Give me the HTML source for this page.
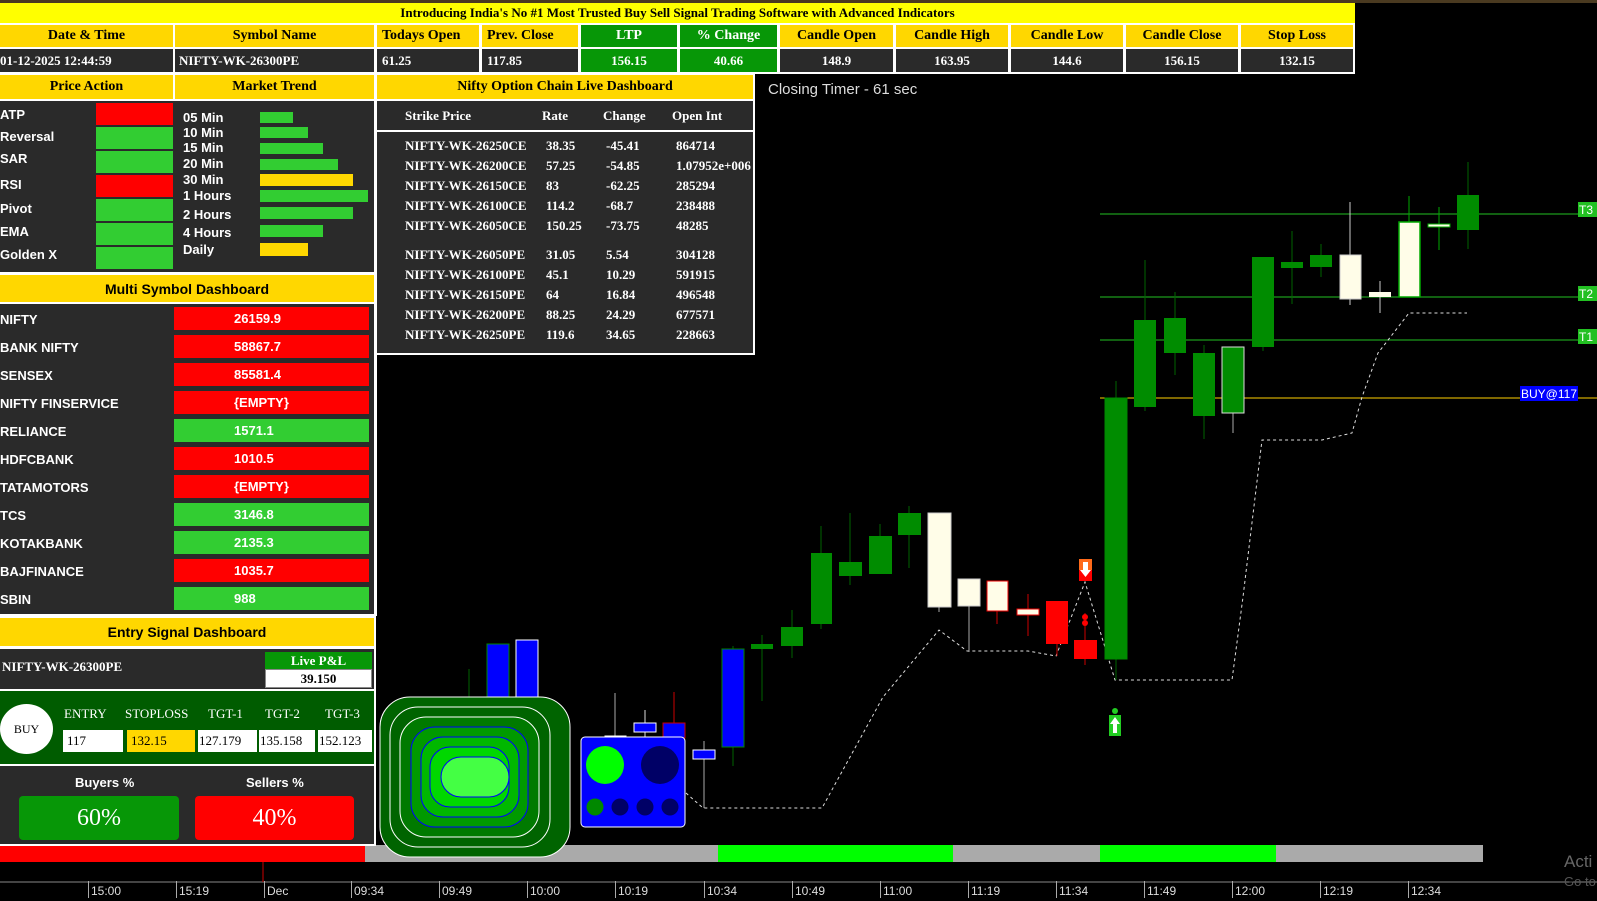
<!DOCTYPE html><html><head><style>
*{margin:0;padding:0;box-sizing:border-box}
body{width:1597px;height:898px;background:#000;overflow:hidden;position:relative;font-family:"Liberation Sans",sans-serif}
.a{position:absolute}
.g{background:#ffd700;color:#000}
.d{background:#2a2a2a;color:#fff}
.serif{font-family:"Liberation Serif",serif;font-weight:bold}
.c{display:flex;align-items:center;justify-content:center}
.hd{font-family:"Liberation Serif",serif;font-weight:bold;font-size:14px}
.lb{font-weight:bold;font-size:13px;color:#fff}
.ms{position:absolute;left:0;font-weight:bold;font-size:13px;color:#fff}
.mv{position:absolute;left:174px;width:195px;height:23px;font-weight:bold;font-size:13px;color:#fff;padding-left:60px;line-height:23px}
.oc{position:absolute;font-family:"Liberation Serif",serif;font-weight:bold;font-size:13px;color:#fff}
.ax{position:absolute;top:881px;font-size:12px;color:#ddd;border-left:1px solid #aaa;padding-left:2px;height:17px;line-height:20px}
</style></head><body>
<svg class="a" style="left:0;top:0" width="1597" height="898">
<line x1="1100" y1="214" x2="1597" y2="214" stroke="#22c022" stroke-width="1"/>
<line x1="1100" y1="297" x2="1597" y2="297" stroke="#22c022"/>
<line x1="1100" y1="340" x2="1597" y2="340" stroke="#22c022"/>
<line x1="1100" y1="398" x2="1597" y2="398" stroke="#ffd000"/>
<rect x="1578" y="202" width="19" height="15" fill="#22c022"/><text x="1579" y="214" font-size="12" fill="#fff" font-family="Liberation Sans">T3</text>
<rect x="1578" y="286" width="19" height="15" fill="#22c022"/><text x="1579" y="298" font-size="12" fill="#fff" font-family="Liberation Sans">T2</text>
<rect x="1578" y="329" width="19" height="15" fill="#22c022"/><text x="1579" y="341" font-size="12" fill="#fff" font-family="Liberation Sans">T1</text>
<rect x="1520" y="386" width="58" height="15" fill="#0000ff"/><text x="1521" y="398" font-size="12" fill="#fff" font-family="Liberation Sans">BUY@117</text>
<polyline fill="none" stroke="#ddd" stroke-dasharray="3,3" points="686,793 703,808 822,808 883,697 939,630 967,651 1028,651 1056,656 1085,582 1115,680 1232,680 1243,597 1262,440 1322,440 1352,433 1362,397 1378,353 1409,313 1467,313"/>
<g stroke-width="1">
<line x1="469" y1="669" x2="469" y2="700" stroke="#006400"/>
<line x1="615" y1="693" x2="615" y2="740" stroke="#aaa"/>
<line x1="645" y1="710" x2="645" y2="740" stroke="#ddd"/>
<line x1="674" y1="692" x2="674" y2="740" stroke="#c00"/>
<line x1="704" y1="741" x2="704" y2="808" stroke="#aaa"/>
<line x1="733" y1="646" x2="733" y2="766" stroke="#006400"/>
<line x1="762" y1="635" x2="762" y2="701" stroke="#006400"/>
<line x1="792" y1="610" x2="792" y2="658" stroke="#006400"/>
<line x1="821" y1="526" x2="821" y2="629" stroke="#006400"/>
<line x1="850" y1="513" x2="850" y2="585" stroke="#006400"/>
<line x1="880" y1="524" x2="880" y2="574" stroke="#006400"/>
<line x1="909" y1="506" x2="909" y2="568" stroke="#006400"/>
<line x1="939" y1="513" x2="939" y2="612" stroke="#aaa"/>
<line x1="969" y1="579" x2="969" y2="652" stroke="#aaa"/>
<line x1="997" y1="581" x2="997" y2="624" stroke="#c00"/>
<line x1="1028" y1="594" x2="1028" y2="636" stroke="#c00"/>
<line x1="1057" y1="601" x2="1057" y2="656" stroke="#c00"/>
<line x1="1085" y1="613" x2="1085" y2="665" stroke="#c00"/>
<line x1="1116" y1="381" x2="1116" y2="680" stroke="#006400"/>
<line x1="1145" y1="260" x2="1145" y2="411" stroke="#006400"/>
<line x1="1175" y1="292" x2="1175" y2="375" stroke="#006400"/>
<line x1="1204" y1="345" x2="1204" y2="439" stroke="#006400"/>
<line x1="1233" y1="347" x2="1233" y2="433" stroke="#aaa"/>
<line x1="1263" y1="257" x2="1263" y2="351" stroke="#006400"/>
<line x1="1292" y1="231" x2="1292" y2="304" stroke="#006400"/>
<line x1="1321" y1="244" x2="1321" y2="277" stroke="#006400"/>
<line x1="1350" y1="202" x2="1350" y2="305" stroke="#ccc"/>
<line x1="1380" y1="281" x2="1380" y2="313" stroke="#ccc"/>
<line x1="1409" y1="196" x2="1409" y2="222" stroke="#0a0"/>
<line x1="1439" y1="207" x2="1439" y2="250" stroke="#0a0"/>
<line x1="1468" y1="162" x2="1468" y2="249" stroke="#006400"/>
</g>
<rect x="487" y="644" width="22" height="60" fill="#00f" stroke="#080"/>
<rect x="516" y="640" width="22" height="64" fill="#00f" stroke="#fff"/>
<rect x="605" y="736" width="21" height="3" fill="#00f" stroke="#fff"/>
<rect x="634" y="723" width="22" height="9" fill="#00f" stroke="#fff"/>
<rect x="663" y="723" width="22" height="15" fill="#00f" stroke="#c00"/>
<rect x="693" y="750" width="22" height="9" fill="#00f" stroke="#fff"/>
<rect x="722" y="649" width="22" height="98" fill="#00f" stroke="#080"/>
<rect x="751" y="644" width="22" height="5" fill="#008c00"/>
<rect x="781" y="627" width="22" height="19" fill="#008c00"/>
<rect x="811" y="553" width="21" height="71" fill="#008c00"/>
<rect x="839" y="562" width="23" height="14" fill="#008c00"/>
<rect x="869" y="536" width="23" height="38" fill="#008c00"/>
<rect x="898" y="513" width="23" height="22" fill="#008c00"/>
<rect x="928" y="513" width="23" height="94" fill="#fffde8" stroke="#ccc"/>
<rect x="958" y="579" width="22" height="27" fill="#fffde8" stroke="#ccc"/>
<rect x="987" y="581" width="21" height="30" fill="#fffde8" stroke="#e00"/>
<rect x="1017" y="609" width="22" height="6" fill="#fffde8" stroke="#e00"/>
<rect x="1046" y="601" width="22" height="43" fill="#f00"/>
<rect x="1074" y="640" width="23" height="19" fill="#f00"/>
<circle cx="1085" cy="617" r="3" fill="#f00"/><circle cx="1085" cy="623" r="3" fill="#f00"/>
<rect x="1079" y="559" width="13" height="11" fill="#ff6a1a"/><rect x="1079" y="570" width="13" height="11" fill="#f00"/>
<path d="M1083 562h5v8h3l-5.5 7l-5.5-7h3z" fill="#fff"/>
<rect x="1105" y="398" width="22" height="261" fill="#008c00" stroke="#080"/>
<rect x="1109" y="715" width="12" height="21" fill="#2c2"/><path d="M1115 717l5 7h-3v9h-4v-9h-3z" fill="#fff"/><circle cx="1115" cy="711" r="3" fill="#2c2"/>
<rect x="1134" y="320" width="22" height="87" fill="#008c00"/>
<rect x="1164" y="318" width="22" height="35" fill="#008c00"/>
<rect x="1193" y="353" width="22" height="63" fill="#008c00"/>
<rect x="1222" y="347" width="22" height="66" fill="#008c00" stroke="#ddd"/>
<rect x="1252" y="257" width="22" height="90" fill="#008c00"/>
<rect x="1281" y="262" width="22" height="6" fill="#008c00"/>
<rect x="1310" y="255" width="22" height="12" fill="#008c00"/>
<rect x="1340" y="255" width="21" height="44" fill="#fffde8" stroke="#ccc"/>
<rect x="1369" y="292" width="22" height="5" fill="#fffde8"/>
<rect x="1399" y="222" width="21" height="75" fill="#fffde8" stroke="#0a0" stroke-width="1.5"/>
<rect x="1428" y="224" width="22" height="3" fill="#fffde8" stroke="#0a0"/>
<rect x="1457" y="195" width="22" height="35" fill="#008c00"/>
<rect x="0" y="845" width="365" height="17" fill="#f00"/>
<rect x="365" y="845" width="353" height="17" fill="#aaa"/>
<rect x="718" y="845" width="235" height="17" fill="#00ff00"/>
<rect x="953" y="845" width="147" height="17" fill="#aaa"/>
<rect x="1100" y="845" width="176" height="17" fill="#00ff00"/>
<rect x="1276" y="845" width="207" height="17" fill="#aaa"/>
<line x1="0" y1="882" x2="1597" y2="882" stroke="#888"/>
<line x1="263" y1="862" x2="263" y2="882" stroke="#c00"/>
<rect x="380" y="697" width="190" height="160" rx="30" fill="#006400" stroke="#fff"/>
<rect x="390" y="707" width="160" height="140" rx="28" fill="#006400" stroke="#fff"/>
<rect x="400" y="717" width="139" height="120" rx="26" fill="#007a00" stroke="#fff"/>
<rect x="411" y="727" width="117" height="100" rx="24" fill="#009a00" stroke="#00f"/>
<rect x="421" y="737" width="98" height="80" rx="22" fill="#00b800" stroke="#00f"/>
<rect x="430" y="747" width="79" height="60" rx="20" fill="#00d800" stroke="#00f"/>
<rect x="441" y="757" width="68" height="40" rx="20" fill="#44ff44" stroke="#00f"/>
<rect x="581" y="737" width="104" height="90" rx="4" fill="#0000ff" stroke="#fff"/>
<ellipse cx="605" cy="765" rx="19" ry="19" fill="#00ff00"/>
<ellipse cx="660" cy="765" rx="19" ry="19" fill="#000066"/>
<circle cx="595" cy="807" r="8.5" fill="#008800"/>
<circle cx="620" cy="807" r="8.5" fill="#000066"/>
<circle cx="645" cy="807" r="8.5" fill="#000066"/>
<circle cx="670" cy="807" r="8.5" fill="#000066"/>
<text x="1564" y="867" font-size="17" fill="#666" font-family="Liberation Sans">Acti</text>
<text x="1564" y="886" font-size="13" fill="#555" font-family="Liberation Sans">Go to</text>
</svg>

<div class="a" style="left:0;top:0;width:1597px;height:3px;background:#4a3a20"></div>
<div class="a c serif" style="left:0;top:3px;width:1355px;height:20px;background:#ffff00;font-size:13px">Introducing India's No #1 Most Trusted Buy Sell Signal Trading Software with Advanced Indicators</div>
<div class="a" style="left:0;top:23px;width:1355px;height:51px;background:#fff"></div>
<div class="a g c hd" style="left:0;top:25px;width:173px;height:22px">Date &amp; Time</div>
<div class="a g c hd" style="left:175px;top:25px;width:199px;height:22px">Symbol Name</div>
<div class="a g c hd" style="left:377px;top:25px;width:102px;height:22px;justify-content:flex-start;padding-left:5px">Todays Open</div>
<div class="a g c hd" style="left:482px;top:25px;width:96px;height:22px;justify-content:flex-start;padding-left:5px">Prev. Close</div>
<div class="a c hd" style="left:581px;top:25px;width:96px;height:22px;background:#079707;color:#fff">LTP</div>
<div class="a c hd" style="left:680px;top:25px;width:97px;height:22px;background:#079707;color:#fff">% Change</div>
<div class="a g c hd" style="left:780px;top:25px;width:113px;height:22px">Candle Open</div>
<div class="a g c hd" style="left:896px;top:25px;width:112px;height:22px">Candle High</div>
<div class="a g c hd" style="left:1011px;top:25px;width:112px;height:22px">Candle Low</div>
<div class="a g c hd" style="left:1126px;top:25px;width:112px;height:22px">Candle Close</div>
<div class="a g c hd" style="left:1241px;top:25px;width:112px;height:22px">Stop Loss</div>
<div class="a d c hd" style="left:0;top:49px;width:173px;height:23px;justify-content:flex-start;font-size:13px">01-12-2025 12:44:59</div>
<div class="a d c hd" style="left:175px;top:49px;width:199px;height:23px;justify-content:flex-start;padding-left:4px;font-size:13px">NIFTY-WK-26300PE</div>
<div class="a d c hd" style="left:377px;top:49px;width:102px;height:23px;justify-content:flex-start;padding-left:5px;font-size:13px">61.25</div>
<div class="a d c hd" style="left:482px;top:49px;width:96px;height:23px;justify-content:flex-start;padding-left:5px;font-size:13px">117.85</div>
<div class="a c hd" style="left:581px;top:49px;width:96px;height:23px;background:#079707;color:#fff;font-size:13px">156.15</div>
<div class="a c hd" style="left:680px;top:49px;width:97px;height:23px;background:#079707;color:#fff;font-size:13px">40.66</div>
<div class="a d c hd" style="left:780px;top:49px;width:113px;height:23px;font-size:13px">148.9</div>
<div class="a d c hd" style="left:896px;top:49px;width:112px;height:23px;font-size:13px">163.95</div>
<div class="a d c hd" style="left:1011px;top:49px;width:112px;height:23px;font-size:13px">144.6</div>
<div class="a d c hd" style="left:1126px;top:49px;width:112px;height:23px;font-size:13px">156.15</div>
<div class="a d c hd" style="left:1241px;top:49px;width:112px;height:23px;font-size:13px">132.15</div>

<div class="a" style="left:0;top:74px;width:377px;height:542px;background:#fff"></div>
<div class="a g c hd" style="left:0;top:75px;width:173px;height:24px">Price Action</div>
<div class="a g c hd" style="left:175px;top:75px;width:199px;height:24px">Market Trend</div>
<div class="a d" style="left:0;top:101px;width:374px;height:171px"></div>
<div class="ms" style="top:107px">ATP</div><div class="ms" style="top:129px">Reversal</div><div class="ms" style="top:151px">SAR</div><div class="ms" style="top:177px">RSI</div><div class="ms" style="top:201px">Pivot</div><div class="ms" style="top:224px">EMA</div><div class="ms" style="top:247px">Golden X</div>
<div class="a" style="left:96px;top:103px;width:77px;height:22px;background:#f00"></div>
<div class="a" style="left:96px;top:127px;width:77px;height:22px;background:#32cd32"></div>
<div class="a" style="left:96px;top:151px;width:77px;height:22px;background:#32cd32"></div>
<div class="a" style="left:96px;top:175px;width:77px;height:22px;background:#f00"></div>
<div class="a" style="left:96px;top:199px;width:77px;height:22px;background:#32cd32"></div>
<div class="a" style="left:96px;top:223px;width:77px;height:22px;background:#32cd32"></div>
<div class="a" style="left:96px;top:247px;width:77px;height:22px;background:#32cd32"></div>
<div class="ms" style="left:183px;top:110px">05 Min</div><div class="ms" style="left:183px;top:125px">10 Min</div><div class="ms" style="left:183px;top:140px">15 Min</div><div class="ms" style="left:183px;top:156px">20 Min</div><div class="ms" style="left:183px;top:172px">30 Min</div><div class="ms" style="left:183px;top:188px">1 Hours</div><div class="ms" style="left:183px;top:207px">2 Hours</div><div class="ms" style="left:183px;top:225px">4 Hours</div><div class="ms" style="left:183px;top:242px">Daily</div>
<div class="a" style="left:260px;top:112px;width:33px;height:11px;background:#32cd32"></div>
<div class="a" style="left:260px;top:127px;width:48px;height:11px;background:#32cd32"></div>
<div class="a" style="left:260px;top:143px;width:63px;height:11px;background:#32cd32"></div>
<div class="a" style="left:260px;top:159px;width:78px;height:11px;background:#32cd32"></div>
<div class="a" style="left:260px;top:174px;width:93px;height:12px;background:#ffd700"></div>
<div class="a" style="left:260px;top:190px;width:108px;height:12px;background:#32cd32"></div>
<div class="a" style="left:260px;top:207px;width:93px;height:12px;background:#32cd32"></div>
<div class="a" style="left:260px;top:225px;width:63px;height:12px;background:#32cd32"></div>
<div class="a" style="left:260px;top:243px;width:48px;height:13px;background:#ffd700"></div>

<div class="a g c" style="left:0;top:275px;width:374px;height:27px;font-weight:bold;font-size:14px">Multi Symbol Dashboard</div>
<div class="a d" style="left:0;top:304px;width:374px;height:310px"></div>
<div class="ms" style="top:312px">NIFTY</div><div class="mv" style="top:307px;background:#f00">26159.9</div>
<div class="ms" style="top:340px">BANK NIFTY</div><div class="mv" style="top:335px;background:#f00">58867.7</div>
<div class="ms" style="top:368px">SENSEX</div><div class="mv" style="top:363px;background:#f00">85581.4</div>
<div class="ms" style="top:396px">NIFTY FINSERVICE</div><div class="mv" style="top:391px;background:#f00">{EMPTY}</div>
<div class="ms" style="top:424px">RELIANCE</div><div class="mv" style="top:419px;background:#32cd32">1571.1</div>
<div class="ms" style="top:452px">HDFCBANK</div><div class="mv" style="top:447px;background:#f00">1010.5</div>
<div class="ms" style="top:480px">TATAMOTORS</div><div class="mv" style="top:475px;background:#f00">{EMPTY}</div>
<div class="ms" style="top:508px">TCS</div><div class="mv" style="top:503px;background:#32cd32">3146.8</div>
<div class="ms" style="top:536px">KOTAKBANK</div><div class="mv" style="top:531px;background:#32cd32">2135.3</div>
<div class="ms" style="top:564px">BAJFINANCE</div><div class="mv" style="top:559px;background:#f00">1035.7</div>
<div class="ms" style="top:592px">SBIN</div><div class="mv" style="top:587px;background:#32cd32">988</div>

<div class="a" style="left:375px;top:74px;width:380px;height:281px;background:#fff"></div>
<div class="a g c hd" style="left:377px;top:75px;width:376px;height:24px">Nifty Option Chain Live Dashboard</div>
<div class="a d" style="left:377px;top:101px;width:376px;height:252px"></div>
<div class="a" style="left:377px;top:130px;width:376px;height:2px;background:#fff"></div>
<div class="oc" style="left:405px;top:108px">Strike Price</div><div class="oc" style="left:542px;top:108px">Rate</div><div class="oc" style="left:603px;top:108px">Change</div><div class="oc" style="left:672px;top:108px">Open Int</div>
<div class="oc" style="left:405px;top:136px;line-height:20px">NIFTY-WK-26250CE<br>NIFTY-WK-26200CE<br>NIFTY-WK-26150CE<br>NIFTY-WK-26100CE<br>NIFTY-WK-26050CE</div>
<div class="oc" style="left:546px;top:136px;line-height:20px">38.35<br>57.25<br>83<br>114.2<br>150.25</div>
<div class="oc" style="left:606px;top:136px;line-height:20px">-45.41<br>-54.85<br>-62.25<br>-68.7<br>-73.75</div>
<div class="oc" style="left:676px;top:136px;line-height:20px">864714<br>1.07952e+006<br>285294<br>238488<br>48285</div>
<div class="oc" style="left:405px;top:245px;line-height:20px">NIFTY-WK-26050PE<br>NIFTY-WK-26100PE<br>NIFTY-WK-26150PE<br>NIFTY-WK-26200PE<br>NIFTY-WK-26250PE</div>
<div class="oc" style="left:546px;top:245px;line-height:20px">31.05<br>45.1<br>64<br>88.25<br>119.6</div>
<div class="oc" style="left:606px;top:245px;line-height:20px">5.54<br>10.29<br>16.84<br>24.29<br>34.65</div>
<div class="oc" style="left:676px;top:245px;line-height:20px">304128<br>591915<br>496548<br>677571<br>228663</div>
<div class="a" style="left:768px;top:81px;font-size:15px;color:#ddd">Closing Timer - 61 sec</div>

<div class="a" style="left:0;top:616px;width:376px;height:230px;background:#fff"></div>
<div class="a g c" style="left:0;top:618px;width:374px;height:28px;font-weight:bold;font-size:14px">Entry Signal Dashboard</div>
<div class="a d" style="left:0;top:649px;width:374px;height:40px"></div>
<div class="oc" style="left:2px;top:659px">NIFTY-WK-26300PE</div>
<div class="a c hd" style="left:265px;top:652px;width:107px;height:17px;background:#079707;color:#fff;font-size:13px">Live P&amp;L</div>
<div class="a c hd" style="left:265px;top:669px;width:107px;height:19px;background:#fff;font-size:13px;border:1px solid #888">39.150</div>
<div class="a" style="left:0;top:691px;width:374px;height:73px;background:#005c00"></div>
<div class="a c hd" style="left:0;top:704px;width:53px;height:50px;border-radius:50%;background:#fff;font-size:12px;font-weight:normal">BUY</div>
<div class="oc" style="left:64px;top:706px;font-weight:normal">ENTRY</div>
<div class="oc" style="left:125px;top:706px;font-weight:normal">STOPLOSS</div>
<div class="oc" style="left:208px;top:706px;font-weight:normal">TGT-1</div>
<div class="oc" style="left:265px;top:706px;font-weight:normal">TGT-2</div>
<div class="oc" style="left:325px;top:706px;font-weight:normal">TGT-3</div>
<div class="a oc" style="left:63px;top:730px;width:60px;height:22px;background:#fff;color:#000;font-weight:normal;padding:3px 4px">117</div>
<div class="a oc" style="left:127px;top:730px;width:68px;height:22px;background:#ffd700;color:#000;font-weight:normal;padding:3px 4px">132.15</div>
<div class="a oc" style="left:198px;top:730px;width:59px;height:22px;background:#fff;color:#000;font-weight:normal;padding:3px 1px">127.179</div>
<div class="a oc" style="left:259px;top:730px;width:56px;height:22px;background:#fff;color:#000;font-weight:normal;padding:3px 1px">135.158</div>
<div class="a oc" style="left:318px;top:730px;width:54px;height:22px;background:#fff;color:#000;font-weight:normal;padding:3px 1px">152.123</div>
<div class="a d" style="left:0;top:766px;width:374px;height:78px"></div>
<div class="a lb" style="left:75px;top:775px">Buyers %</div>
<div class="a lb" style="left:246px;top:775px">Sellers %</div>
<div class="a c" style="left:19px;top:796px;width:160px;height:44px;background:#079707;color:#fff;border-radius:4px;font-family:'Liberation Serif',serif;font-size:24px">60%</div>
<div class="a c" style="left:195px;top:796px;width:159px;height:44px;background:#f00;color:#fff;border-radius:4px;font-family:'Liberation Serif',serif;font-size:24px">40%</div>

<div class="ax" style="left:88px">15:00</div><div class="ax" style="left:176px">15:19</div><div class="ax" style="left:264px">Dec</div><div class="ax" style="left:351px">09:34</div><div class="ax" style="left:439px">09:49</div><div class="ax" style="left:527px">10:00</div><div class="ax" style="left:615px">10:19</div><div class="ax" style="left:704px">10:34</div><div class="ax" style="left:792px">10:49</div><div class="ax" style="left:880px">11:00</div><div class="ax" style="left:968px">11:19</div><div class="ax" style="left:1056px">11:34</div><div class="ax" style="left:1144px">11:49</div><div class="ax" style="left:1232px">12:00</div><div class="ax" style="left:1320px">12:19</div><div class="ax" style="left:1408px">12:34</div>
</body></html>
